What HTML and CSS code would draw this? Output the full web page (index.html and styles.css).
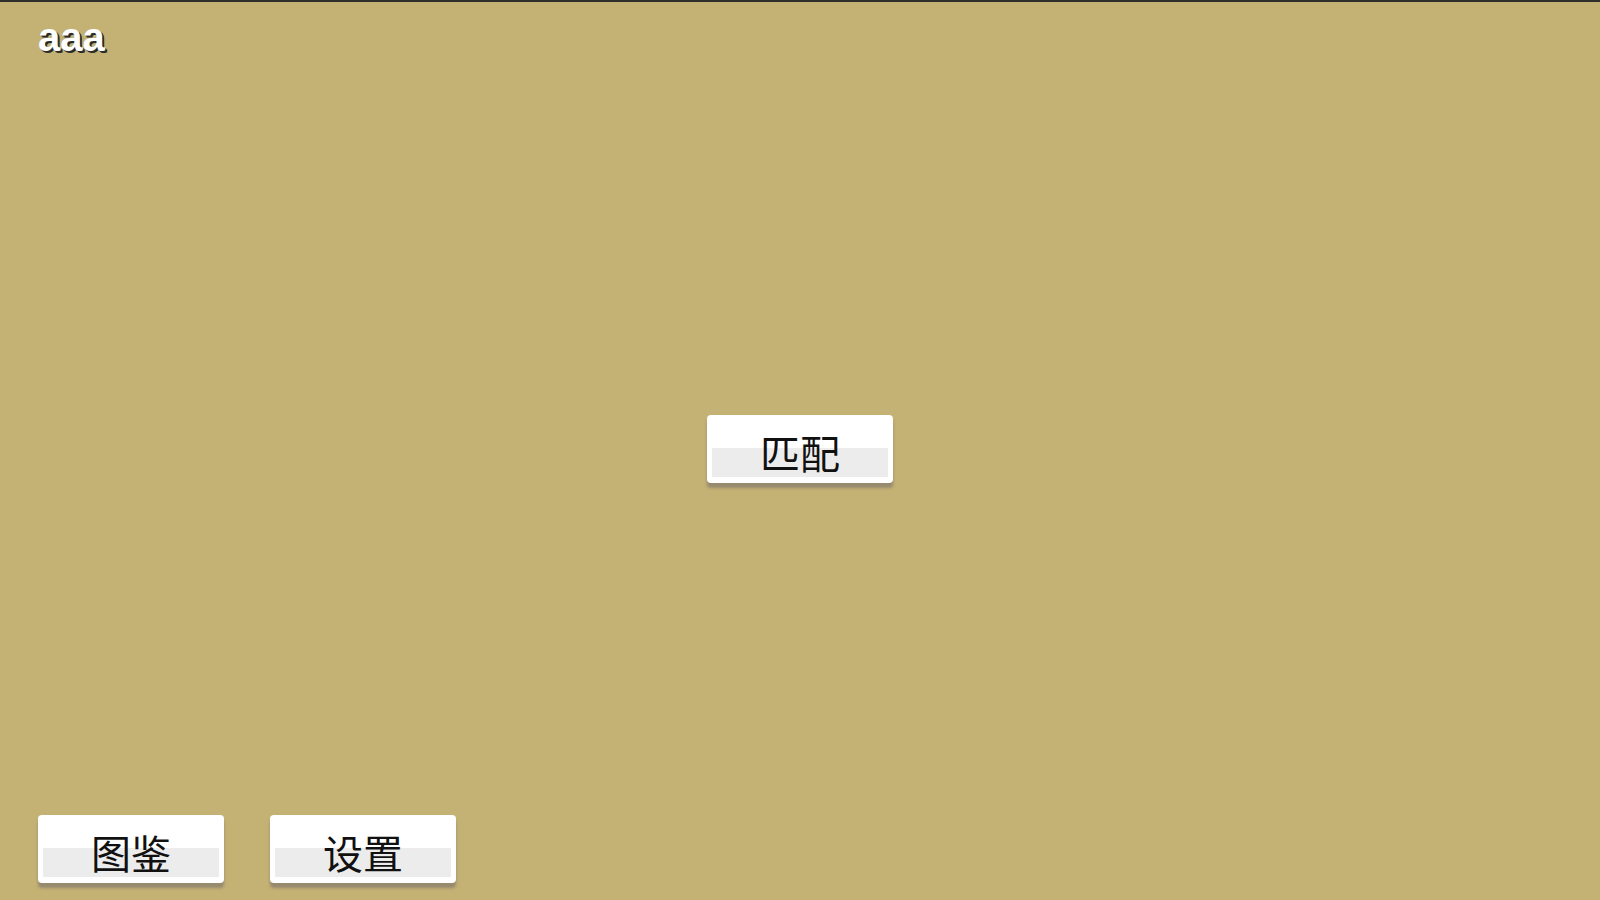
FILE: index.html
```html
<!DOCTYPE html>
<html lang="zh">
<head>
<meta charset="utf-8">
<title>Menu</title>
<link rel="stylesheet" href="styles.css">
</head>
<body>
<div class="screen">
  <header class="top">
    <div class="name">aaa</div>
  </header>
  <main class="center">
    <button class="btn">匹配</button>
  </main>
  <footer class="bottom">
    <button class="btn">图鉴</button>
    <button class="btn">设置</button>
  </footer>
</div>
</body>
</html>
```

FILE: styles.css
```css
html, body {
  margin: 0;
  padding: 0;
}
body {
  width: 1600px;
  height: 900px;
  overflow: hidden;
  background: #c4b274;
}
.screen {
  width: 1600px;
  height: 900px;
  box-sizing: border-box;
  border-top: 2px solid #2f2e2a;
  background: #c4b274;
  display: flex;
  flex-direction: column;
}
.top {
  height: 81px;
  box-sizing: border-box;
  padding: 12px 0 0 38px;
}
.name {
  font-family: "Liberation Sans", Arial, sans-serif;
  font-weight: bold;
  font-size: 40px;
  line-height: 46px;
  color: #ffffff;
  text-shadow: 2px 2px 0 #2b2b28, 1px 1px 0 #2b2b28;
}
.center {
  flex: 1;
  display: flex;
  align-items: center;
  justify-content: center;
}
.bottom {
  display: flex;
  gap: 46px;
  padding: 0 0 17px 38px;
}
.btn {
  width: 186px;
  height: 68px;
  box-sizing: border-box;
  border: none;
  border-radius: 4px;
  padding: 6px 0 0 0;
  margin: 0;
  background: linear-gradient(#ececec, #ececec) 5px 33px / calc(100% - 10px) 29px no-repeat, #ffffff;
  box-shadow: 0 5px 3px rgba(105, 98, 105, 0.5);
  font-family: "Noto Sans CJK SC", "Noto Sans", sans-serif;
  font-size: 40px;
  line-height: 40px;
  color: #111111;
  display: flex;
  align-items: center;
  justify-content: center;
}
```
